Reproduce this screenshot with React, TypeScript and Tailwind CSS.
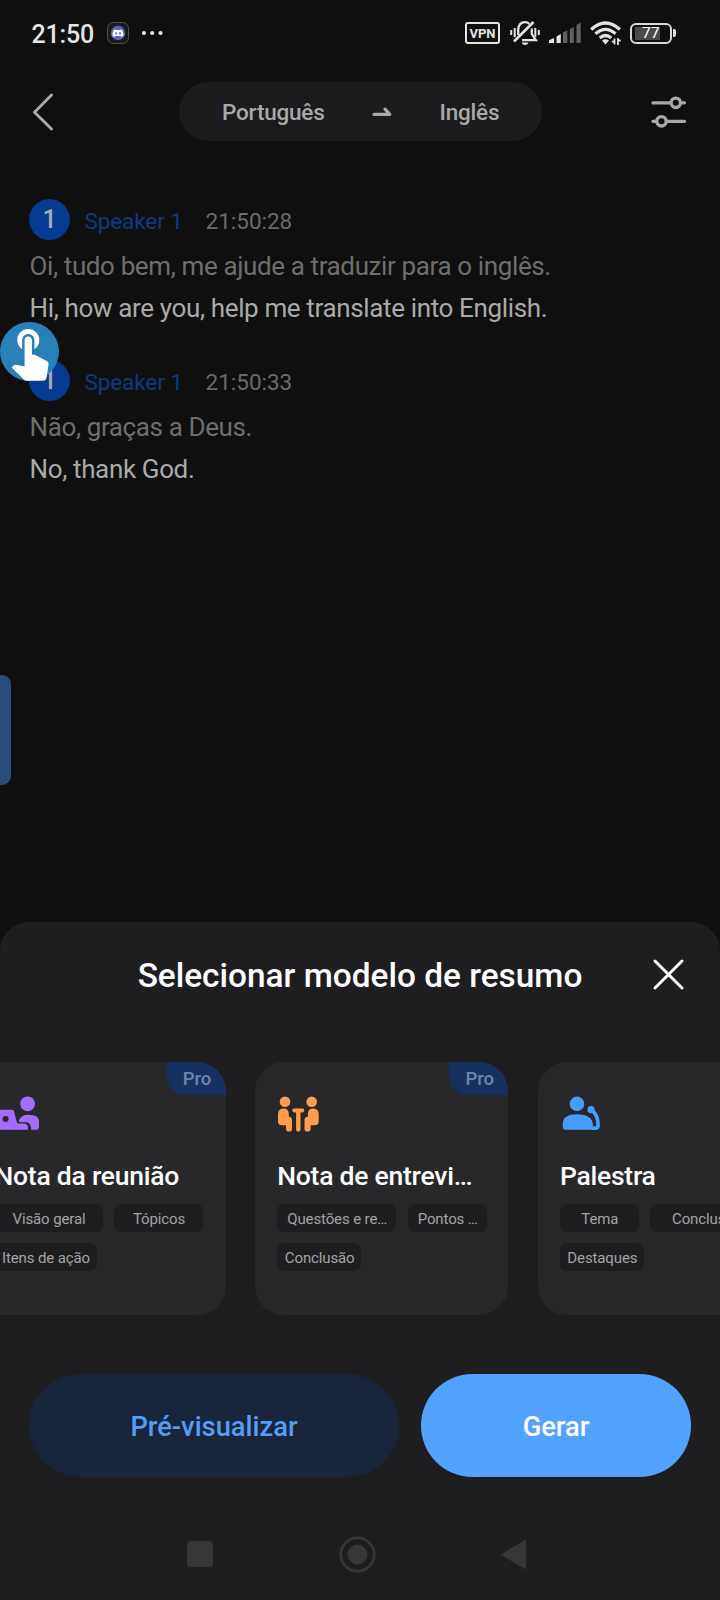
import React from "react";

type Tag = { label: string; width: string };
type Template = {
  title: string;
  pro: boolean;
  icon: React.ReactNode;
  rows: Tag[][];
};

function MeetingIcon() {
  return (
    <svg className="ml-[3px] block overflow-visible" width="42" height="37" viewBox="0 0 42 37">
      <g fill="#a46dff">
        <circle cx="29.6" cy="7.8" r="7.4" />
        <path d="M-2 13.8H14.2q1.500 0 1.900 1.600L18.800 26.300q.3 1.200 1.600 1.200H26q3 .2 4.200 3.600L29.800 33.800H3Q-1 33.800-2 31z" />
        <path d="M22 26.300q-1.600-.4-1-2.200Q23.600 18.800 30.600 18.800 41 18.800 41 25V30.400q0 3.400-3.400 3.400H33.200Q33 26.600 28 26.300z" />
      </g>
      <circle cx="7.600" cy="23" r="3" fill="#28282a" />
    </svg>
  );
}

function InterviewIcon() {
  return (
    <svg className="block" width="42" height="37" viewBox="0 0 42 37">
      <g fill="#ff9d4d">
        <circle cx="8" cy="5.8" r="5.3" />
        <circle cx="34.7" cy="5.8" r="5.3" />
        <path d="M1 18.6Q1 12.6 6.5 12.6 11.6 12.6 11.8 17.8V20.4Q15 20.8 15 24.2V32.4Q15 35.6 12 35.6 9 35.6 9 32.4V29.2H4.8Q1 29.2 1 25.6z" />
        <path d="M41.7 18.6Q41.7 12.6 36.2 12.6 31.1 12.6 30.9 17.8V20.4Q27.5 20.8 27.5 24.2V32.4Q27.5 35.6 30.6 35.6 33.6 35.6 33.6 32.4V29.2H37.9Q41.7 29.2 41.7 25.6z" />
        <path d="M17 12.6H25.5Q27.2 12.8 27.2 14.5 27.2 16.3 25.5 16.4H23.5V33.4Q23.5 35.6 21.3 35.6 19.1 35.6 19.1 33.4V16.4H17Q15.3 16.3 15.3 14.5 15.3 12.8 17 12.6z" />
      </g>
    </svg>
  );
}

function LectureIcon() {
  return (
    <svg className="ml-[.5px] block" width="42" height="37" viewBox="0 0 42 37">
      <g fill="#479cff">
        <circle cx="17" cy="7.8" r="7.3" />
        <circle cx="31" cy="13.7" r="3.6" />
        <path d="M2.700 28Q2.700 18.200 17 18.200 31.800 18.400 33 28.500V33.800H6Q2.700 33.800 2.700 30.600z" />
      </g>
      <path d="M32.500 14.600Q38 20.500 38 27.200V30.200Q37.400 32.100 35.400 32.100H31" fill="none" stroke="#479cff" strokeWidth="3.7" />
      <path d="M32.400 22.500Q34.800 26 34.500 30" fill="none" stroke="#28282a" strokeWidth="1.800" />
    </svg>
  );
}

const templates: Template[] = [
  {
    title: "Nota da reunião",
    pro: true,
    icon: <MeetingIcon />,
    rows: [
      [
        { label: "Visão geral", width: "w-[108px]" },
        { label: "Tópicos", width: "w-[89px]" },
      ],
      [{ label: "Itens de ação", width: "w-[102px]" }],
    ],
  },
  {
    title: "Nota de entrevi…",
    pro: true,
    icon: <InterviewIcon />,
    rows: [
      [
        { label: "Questões e re…", width: "w-[119px]" },
        { label: "Pontos …", width: "w-[79px]" },
      ],
      [{ label: "Conclusão", width: "w-[84px]" }],
    ],
  },
  {
    title: "Palestra",
    pro: false,
    icon: <LectureIcon />,
    rows: [
      [
        { label: "Tema", width: "w-[79px]" },
        { label: "Conclusão", width: "w-[112px]" },
      ],
      [{ label: "Destaques", width: "w-[84px]" }],
    ],
  },
];

function StatusBar() {
  return (
    <div className="flex h-[66px] items-center pl-[31.500px] pr-[44px] text-[#e4e4e4]">
      <span className="w-[75.500px] pt-[2px] text-[25px] font-medium leading-none tracking-[-0.15px]">21:50</span>
      <svg className="block" width="22" height="22" viewBox="0 0 22 22">
        <rect x=".5" y=".5" width="21" height="21" rx="6" fill="#1b1a19" stroke="#6a6050" strokeWidth=".8" />
        <circle cx="11" cy="11" r="7.2" fill="#5d62c4" />
        <path
          fill="#fff"
          d="M8.6 7.4q-1.2.2-1.9.8Q5.4 10.800 5.500 13.800q1.100.9 2.400 1.100l.7-1.100q2.400.6 4.800 0l.7 1.100q1.300-.2 2.400-1.100.1-3-1.200-5.600-.7-.6-1.900-.8l-.4.7h-4z"
        />
        <circle cx="9.200" cy="11.400" r="1.100" fill="#5d62c4" />
        <circle cx="12.900" cy="11.400" r="1.100" fill="#5d62c4" />
      </svg>
      <svg className="ml-[12px] block" width="22" height="6" viewBox="0 0 22 6" fill="currentColor">
        <circle cx="3" cy="3" r="2.100" />
        <circle cx="11.200" cy="3" r="2.100" />
        <circle cx="19.500" cy="3" r="2.100" />
      </svg>
      <div className="ml-auto flex items-center">
        <span className="flex h-[22px] w-[35px] items-center justify-center rounded-[3px] border-2 border-[#e4e4e4] text-[13px] font-bold leading-none">
          VPN
        </span>
        <svg className="ml-[10px] block" width="30" height="26" viewBox="0 0 30 26" fill="none" stroke="currentColor" strokeWidth="2.300">
          <path d="M1.200 10v5M4.700 8v9M25.300 8v9M28.800 10v5" strokeWidth="2" />
          <path d="M8.200 15V9.800Q8.600 2.200 15 2.200q2.500 0 4.300 1.600M21.800 8.500V14l4 6.200H12" />
          <path d="M4 21.500 23.500 2" strokeWidth="2.600" />
          <path d="M11.500 22.500h7q-1 2.500-3.500 2.500t-3.500-2.500z" fill="currentColor" stroke="none" />
        </svg>
        <svg className="ml-[9px] block" width="33" height="22" viewBox="0 0 33 22">
          <g fill="#e4e4e4">
            <path d="M0 18.500q2-1.500 5-2.500v5H0z" />
            <path d="M7.500 14.500 11.800 12v9H7.500z" />
          </g>
          <g fill="#616161">
            <path d="M14 10.500l4.300-2V21H14z" />
            <path d="M20.800 7l4-2V21h-4z" />
            <path d="M27.500 3l4.200-2.400V21h-4.200z" />
          </g>
        </svg>
        <svg className="ml-[8px] block" width="32" height="24" viewBox="0 0 32 24" fill="none" stroke="currentColor" strokeWidth="3.300">
          <path d="M1.200 8.500q14.300-13 28.600 0" />
          <path d="M5.500 12.800q10-8.800 20 0" />
          <path d="M9.800 17q5.700-5 11.400 0" />
          <path d="M12 19.500q3.500-2.500 7 0l-3.500 4z" fill="currentColor" stroke="none" />
          <path d="M24.500 23.500v-6M28 17v7" strokeWidth="1.800" />
          <path d="M21.800 20.700h3M27.500 19.500h3.200" strokeWidth="1.800" />
        </svg>
        <div className="ml-[8px] flex h-[21px] w-[42px] items-center rounded-[6px] border-2 border-[#d8d8d8] p-[3px]">
          <div className="flex h-[13px] w-[25px] items-center bg-[#4a4a4a] pl-[7px] pt-[2px] text-[15.500px] leading-none text-white">77</div>
        </div>
        <div className="ml-px h-[8px] w-[3px] rounded-r-[2px] bg-[#d8d8d8]" />
      </div>
    </div>
  );
}

function Header() {
  return (
    <header className="mt-[16px] flex h-[59px] items-center text-[#a9a9a9]">
      <svg className="ml-[32px] block" width="22" height="38" viewBox="0 0 22 38" fill="none" stroke="currentColor" strokeWidth="3" strokeLinecap="round" strokeLinejoin="round">
        <path d="M19.500 2 2.500 19.300 19.500 36" />
      </svg>
      <div className="ml-[125px] flex h-[59px] w-[363px] items-center rounded-full bg-[#1b1b1d] text-[22.500px] font-medium tracking-[-0.2px]">
        <span className="ml-[43px] w-[149.500px] pt-[2px]">Português</span>
        <svg className="block" width="20" height="10" viewBox="0 0 20 10" fill="none" stroke="currentColor" strokeWidth="3.200" strokeLinecap="round" strokeLinejoin="round">
          <path d="M2 7.300H17.800L13 2.200" />
        </svg>
        <span className="ml-[48px] pt-[2px]">Inglês</span>
      </div>
      <svg className="ml-[109px] block" width="36" height="32" viewBox="0 0 36 32" fill="none" stroke="currentColor" strokeWidth="3.300" strokeLinecap="round">
        <path d="M2 6.800H19M31 6.800H33.500M2 25.300H5M17 25.300H33.500" />
        <circle cx="24.800" cy="6.800" r="4.700" />
        <circle cx="10.500" cy="25.300" r="4.700" />
      </svg>
    </header>
  );
}

function Message({ time, source, translation }: { time: string; source: string; translation: string }) {
  return (
    <article className="h-[161px] pl-[29px]">
      <div className="flex h-[41px] items-center">
        <span className="flex size-[41px] items-center justify-center rounded-full bg-[#063b92] text-[25px] font-medium text-[#a6acb8]">1</span>
        <span className="ml-[14.500px] mt-[4px] w-[121px] text-[22.500px] tracking-[-0.1px] text-[#10397f]">Speaker 1</span>
        <span className="mt-[4px] text-[22.500px] text-[#6b6b6b]">{time}</span>
      </div>
      <p className="ml-[.5px] mt-[5px] whitespace-nowrap text-[26px] leading-[42px] tracking-[-0.38px] text-[#6e6e6e]">{source}</p>
      <p className="ml-[.5px] whitespace-nowrap text-[26px] leading-[42px] tracking-[-0.36px] text-[#aaaaaa]">{translation}</p>
    </article>
  );
}

function TemplateCard({ title, pro, icon, rows }: Template) {
  return (
    <article className="relative h-[253px] w-[253px] shrink-0 overflow-hidden rounded-[29px] bg-[#28282a] pl-[22px] pt-[34px]">
      {pro && (
        <span className="absolute right-0 top-0 flex h-[33px] w-[59px] items-center justify-center rounded-bl-[18px] bg-[#17315f] pl-[2px] pt-[3px] text-[18.500px] font-medium text-[#7085ab]">
          Pro
        </span>
      )}
      {icon}
      <h3 className="mt-[27px] whitespace-nowrap text-[26.500px] font-medium leading-[32px] tracking-[-0.24px] text-white">{title}</h3>
      <div className="mt-[12px] flex flex-col gap-[11px]">
        {rows.map((row, i) => (
          <div key={i} className="flex gap-[11.500px]">
            {row.map((tag) => (
              <span
                key={tag.label}
                className={`${tag.width} flex h-[28px] shrink-0 items-center justify-center whitespace-nowrap rounded-[7px] bg-[#1e1e20] pl-px pt-[2px] text-[15px] tracking-[-0.12px] text-[#a3a3a4]`}
              >
                {tag.label}
              </span>
            ))}
          </div>
        ))}
      </div>
    </article>
  );
}

export default function App() {
  return (
    <div className="relative flex h-[1600px] w-[720px] flex-col overflow-hidden bg-[#0f0f0f] font-['Roboto',sans-serif]">
      <StatusBar />
      <Header />
      <main className="flex-1 pt-[58px]">
        <Message time="21:50:28" source="Oi, tudo bem, me ajude a traduzir para o inglês." translation="Hi, how are you, help me translate into English." />
        <Message time="21:50:33" source="Não, graças a Deus." translation="No, thank God." />
      </main>

      <section className="flex h-[678px] shrink-0 flex-col rounded-t-[29px] bg-[#1e1e20]">
        <div className="grid h-[140px] grid-cols-[1fr_auto_1fr] pt-[30px]">
          <h2 className="col-start-2 h-[46px] text-[33.400px] font-medium leading-[48px] text-white">Selecionar modelo de resumo</h2>
          <button className="mr-[35px] mt-[6px] size-[33px] justify-self-end">
            <svg width="33" height="33" viewBox="0 0 33 33" stroke="#fff" strokeWidth="3" strokeLinecap="round">
              <path d="M3 3 30 30M30 3 3 30" />
            </svg>
          </button>
        </div>
        <div className="ml-[-27.500px] flex gap-[29.700px]">
          {templates.map((t) => (
            <TemplateCard key={t.title} {...t} />
          ))}
        </div>
        <div className="mt-[59px] flex h-[103px] gap-[22px] px-[29px] text-[27.300px] font-medium">
          <button className="w-[370px] rounded-full bg-[#19253b] pt-[3px] text-[#559df5]">Pré-visualizar</button>
          <button className="w-[270px] rounded-full bg-[#54a2ff] pt-[3px] text-white">Gerar</button>
        </div>
        <nav className="mt-[58px] flex h-[38px] items-center pl-[187px]">
          <span className="size-[26px] rounded-[4px] bg-[#373737]" />
          <svg className="ml-[126px]" width="37" height="37" viewBox="0 0 37 37">
            <circle cx="18.500" cy="18.500" r="16.700" fill="none" stroke="#373737" strokeWidth="2.700" />
            <circle cx="18.500" cy="18.500" r="9.900" fill="#373737" />
          </svg>
          <svg className="ml-[125px]" width="26" height="31" viewBox="0 0 26 31">
            <path d="M1.500 15.500 24 2V29z" fill="#373737" stroke="#373737" strokeWidth="2" strokeLinejoin="round" />
          </svg>
        </nav>
      </section>

      <div className="absolute left-0 top-[322px] size-[59px] rounded-full bg-[#2980b9]">
        <svg className="block" width="59" height="59" viewBox="0 0.150 24 24" fill="#fff">
          <path d="M9 11.240V7.500a2.500 2.500 0 0 1 5 0v3.740c1.210-.81 2-2.180 2-3.740C16 5.010 13.990 3 11.500 3S7 5.010 7 7.500c0 1.560.79 2.930 2 3.740zm9.840 4.630l-4.540-2.260c-.17-.07-.35-.11-.54-.11H13v-6c0-.83-.67-1.500-1.500-1.500S10 6.670 10 7.500v10.740l-3.430-.72c-.08-.01-.15-.03-.24-.03-.31 0-.59.13-.79.33l-.79.8 4.940 4.940c.27.27.65.44 1.060.44h6.790c.75 0 1.330-.55 1.440-1.280l.75-5.270c.01-.07.02-.14.02-.2 0-.62-.38-1.160-.91-1.380z" />
        </svg>
      </div>
      <div className="absolute left-0 top-[675px] h-[110px] w-[11px] rounded-r-[9px] bg-[#2b4c78]" />
    </div>
  );
}
